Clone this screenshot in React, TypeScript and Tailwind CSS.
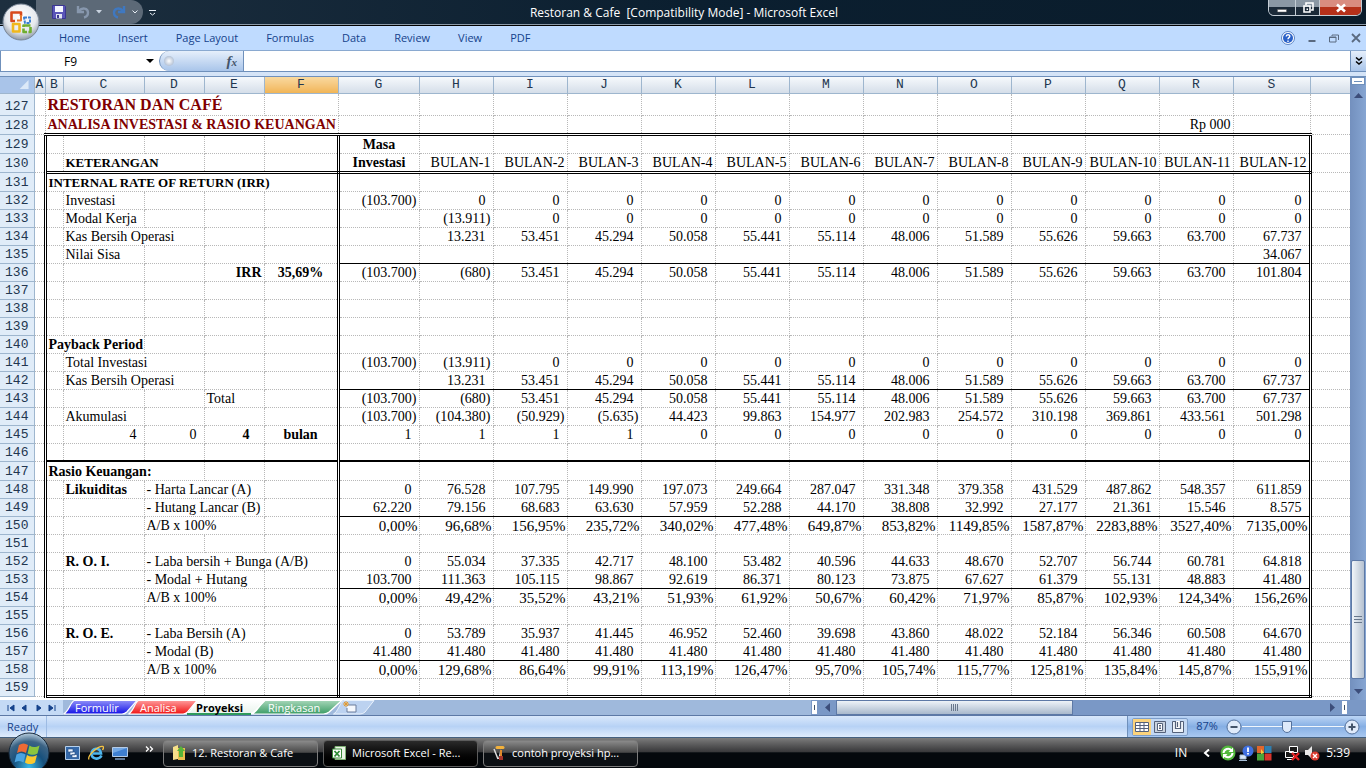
import { useState } from 'react';
import clsx from 'clsx';

type Cell = { text?: string; span?: number; cls?: string };
type Row = { n: number; h?: string; left?: Cell[]; vals?: string[]; line?: 'thin' | 'thick' | 'double' };

const COLS = ['A', 'B', 'C', 'D', 'E', 'F', 'G', 'H', 'I', 'J', 'K', 'L', 'M', 'N', 'O', 'P', 'Q', 'R', 'S'];
const COL_W = [
  'w-[11px]', 'w-[18px]', 'w-[81px]', 'w-[60px]', 'w-[60px]', 'w-[74px]', 'w-[81px]',
  'w-[74px]', 'w-[74px]', 'w-[74px]', 'w-[74px]', 'w-[74px]', 'w-[74px]', 'w-[74px]',
  'w-[74px]', 'w-[74px]', 'w-[74px]', 'w-[74px]', 'w-[77px]',
];

const v = (s: string) => s.split(' ').map((x) => (x === '_' ? '' : x));

// left-hand cells always cover B..F, the spans have to add up to 5
const inC = (text: string, span = 1): Cell[] => [{}, { text, span, cls: 'pl-0.5' }, ...Array.from({ length: 4 - span }, () => ({}))];
const inD = (text: string, span = 2, head = ''): Cell[] => [
  {},
  { text: head, cls: 'pl-0.5 font-bold' },
  { text, span, cls: 'pl-0.5' },
  ...Array.from({ length: 3 - span }, () => ({})),
];

const kas = '53.451 45.294 50.058 55.441 55.114 48.006 51.589 55.626 59.663 63.700';

const ROWS: Row[] = [
  { n: 127, h: 'h-[22px]', left: [{ text: 'RESTORAN DAN CAFÉ', span: 4, cls: 'pl-0.5 text-base leading-5 font-bold text-[#800000]' }, {}] },
  {
    n: 128, h: 'h-[19px]', line: 'double',
    left: [{ text: 'ANALISA INVESTASI & RASIO KEUANGAN', span: 5, cls: 'pl-0.5 font-bold text-[#800000]' }],
    vals: v('_ _ _ _ _ _ _ _ _ _ _ Rp~000 _'),
  },
  { n: 129, h: 'h-[19px]', vals: v('Masa _ _ _ _ _ _ _ _ _ _ _ _') },
  {
    n: 130, h: 'h-[19px]', line: 'double',
    left: [{}, { text: 'KETERANGAN', span: 2, cls: 'pl-0.5 text-[13px] leading-4 font-bold' }, {}, {}],
    vals: v('Investasi BULAN-1 BULAN-2 BULAN-3 BULAN-4 BULAN-5 BULAN-6 BULAN-7 BULAN-8 BULAN-9 BULAN-10 BULAN-11 BULAN-12'),
  },
  { n: 131, h: 'h-[19px]', left: [{ text: 'INTERNAL RATE OF RETURN (IRR)', span: 5, cls: 'pl-0.5 text-[13px] leading-4 font-bold' }] },
  { n: 132, left: inC('Investasi'), vals: v('(103.700) 0 0 0 0 0 0 0 0 0 0 0 0') },
  { n: 133, left: inC('Modal Kerja'), vals: v('_ (13.911) 0 0 0 0 0 0 0 0 0 0 0') },
  { n: 134, left: inC('Kas Bersih Operasi', 2), vals: v(`_ 13.231 ${kas} 67.737`) },
  { n: 135, line: 'thin', left: inC('Nilai Sisa'), vals: v('_ _ _ _ _ _ _ _ _ _ _ _ 34.067') },
  {
    n: 136,
    left: [{}, {}, {}, { text: 'IRR', cls: 'pr-0.5 text-right font-bold' }, { text: '35,69%', cls: 'text-center font-bold' }],
    vals: v(`(103.700) (680) ${kas} 101.804`),
  },
  { n: 137 },
  { n: 138 },
  { n: 139 },
  { n: 140, left: [{ text: 'Payback Period', span: 2, cls: 'pl-0.5 font-bold' }, {}, {}, {}] },
  { n: 141, left: inC('Total Investasi', 2), vals: v('(103.700) (13.911) 0 0 0 0 0 0 0 0 0 0 0') },
  { n: 142, line: 'thin', left: inC('Kas Bersih Operasi', 2), vals: v(`_ 13.231 ${kas} 67.737`) },
  { n: 143, left: [{}, {}, {}, { text: 'Total', cls: 'pl-0.5' }, {}], vals: v(`(103.700) (680) ${kas} 67.737`) },
  {
    n: 144, left: inC('Akumulasi'),
    vals: v('(103.700) (104.380) (50.929) (5.635) 44.423 99.863 154.977 202.983 254.572 310.198 369.861 433.561 501.298'),
  },
  {
    n: 145,
    left: [
      {},
      { text: '4', cls: 'pr-[7px] text-right' },
      { text: '0', cls: 'pr-[7px] text-right' },
      { text: '4', cls: 'pr-3.5 text-right font-bold' },
      { text: 'bulan', cls: 'text-center font-bold' },
    ],
    vals: v('1 1 1 1 0 0 0 0 0 0 0 0 0'),
  },
  { n: 146, line: 'thick' },
  { n: 147, h: 'h-[19px]', left: [{ text: 'Rasio Keuangan:', span: 3, cls: 'pl-0.5 font-bold' }, {}, {}] },
  {
    n: 148, left: inD('- Harta Lancar (A)', 2, 'Likuiditas'),
    vals: v('0 76.528 107.795 149.990 197.073 249.664 287.047 331.348 379.358 431.529 487.862 548.357 611.859'),
  },
  {
    n: 149, line: 'thin', left: inD('- Hutang Lancar (B)'),
    vals: v('62.220 79.156 68.683 63.630 57.959 52.288 44.170 38.808 32.992 27.177 21.361 15.546 8.575'),
  },
  {
    n: 150, left: inD('A/B x 100%'),
    vals: v('0,00% 96,68% 156,95% 235,72% 340,02% 477,48% 649,87% 853,82% 1149,85% 1587,87% 2283,88% 3527,40% 7135,00%'),
  },
  { n: 151 },
  {
    n: 152, left: inD('- Laba bersih + Bunga (A/B)', 3, 'R. O. I.'),
    vals: v('0 55.034 37.335 42.717 48.100 53.482 40.596 44.633 48.670 52.707 56.744 60.781 64.818'),
  },
  {
    n: 153, line: 'thin', left: inD('- Modal + Hutang'),
    vals: v('103.700 111.363 105.115 98.867 92.619 86.371 80.123 73.875 67.627 61.379 55.131 48.883 41.480'),
  },
  {
    n: 154, left: inD('A/B x 100%'),
    vals: v('0,00% 49,42% 35,52% 43,21% 51,93% 61,92% 50,67% 60,42% 71,97% 85,87% 102,93% 124,34% 156,26%'),
  },
  { n: 155 },
  {
    n: 156, left: inD('- Laba Bersih (A)', 2, 'R. O. E.'),
    vals: v('0 53.789 35.937 41.445 46.952 52.460 39.698 43.860 48.022 52.184 56.346 60.508 64.670'),
  },
  {
    n: 157, line: 'thin', left: inD('- Modal (B)'),
    vals: v('41.480 41.480 41.480 41.480 41.480 41.480 41.480 41.480 41.480 41.480 41.480 41.480 41.480'),
  },
  {
    n: 158, left: inD('A/B x 100%'),
    vals: v('0,00% 129,68% 86,64% 99,91% 113,19% 126,47% 95,70% 105,74% 115,77% 125,81% 135,84% 145,87% 155,91%'),
  },
  { n: 159, line: 'double' },
];

const GRID = 'border border-dotted border-[#b8b8b8] p-0 align-bottom';

function valueClass(text: string, col: number, row: number) {
  if (col === 0 && row < 131) return 'text-center font-bold';
  if (text.endsWith('%')) return 'pr-px text-right text-[15px] leading-4';
  if (text.endsWith(')') || /[A-Z]/.test(text)) return 'pr-0.5 text-right';
  return 'pr-[7px] text-right';
}

function bottomClass(line: Row['line'], rightSide: boolean) {
  if (line === 'double') return 'border-b-[3px] [border-bottom-style:double] border-b-black';
  if (line === 'thick') return 'border-b-2 [border-bottom-style:solid] border-b-black';
  if (line === 'thin' && rightSide) return '[border-bottom-style:solid] border-b-black';
  return '';
}

function Sheet() {
  return (
    <table className="w-full table-fixed border-collapse bg-white font-['Liberation_Serif',serif] text-sm leading-4 whitespace-nowrap text-black">
      <colgroup>
        <col className="w-[34px]" />
        {COL_W.map((w, i) => (
          <col key={i} className={w} />
        ))}
        <col />
      </colgroup>
      <thead className="bg-linear-to-b from-[#f6f9fc] to-[#d5dee9] font-['Liberation_Mono',monospace] text-[13px] text-[#22364f]">
        <tr className="h-4">
          <th aria-label="Select all" className="border-r border-b border-[#9eb6ce] bg-[#a9c4e9] p-0">
            <svg viewBox="0 0 34 15" className="block h-[15px] w-full">
              <path d="M29 3v9h-9z" fill="#dce9f8" />
            </svg>
          </th>
          {COLS.map((c) => (
            <th
              key={c}
              scope="col"
              className={clsx(
                'border-x border-b border-[#9eb6ce] p-0 text-center leading-[15px] font-normal',
                c === 'F' && 'bg-linear-to-b from-[#f9d99f] to-[#f1b556]',
              )}
            >
              {c}
            </th>
          ))}
          <th aria-label="T" className="border-b border-[#9eb6ce] p-0" />
        </tr>
      </thead>
      <tbody>
        {ROWS.map((row) => {
          const framed = row.n > 128;
          const left = row.left ?? [{}, {}, {}, {}, {}];
          return (
            <tr key={row.n} className={row.h ?? 'h-[18px]'}>
              <th scope="row" className="border-r border-b border-[#9eb6ce] bg-[#e0ecf8] p-0 text-center align-bottom font-['Liberation_Mono',monospace] text-[13px] font-normal text-[#22364f]">
                {row.n}
              </th>
              <td className={clsx(GRID, framed && 'border-r-[3px] [border-right-style:double] border-r-black')} />
              {left.map((cell, i) => (
                <td
                  key={i}
                  colSpan={cell.span ?? 1}
                  className={clsx(
                    GRID,
                    bottomClass(row.line, false),
                    framed && i === left.length - 1 && 'border-r-[3px] [border-right-style:double] border-r-black',
                    cell.cls,
                  )}
                >
                  {cell.text}
                </td>
              ))}
              {COLS.slice(6).map((c, i) => {
                const text = (row.vals?.[i] ?? '').replace('~', ' ');
                return (
                  <td
                    key={c}
                    className={clsx(
                      GRID,
                      bottomClass(row.line, true),
                      framed && c === 'S' && 'border-r-[3px] [border-right-style:double] border-r-black',
                      valueClass(text, i, row.n),
                    )}
                  >
                    {text}
                  </td>
                );
              })}
              <td className="border-b border-dotted border-[#b8b8b8] p-0" />
            </tr>
          );
        })}
      </tbody>
    </table>
  );
}

function OfficeOrb() {
  return (
    <button aria-label="Office Button" className="absolute top-[3px] left-0.5 z-10">
      <svg viewBox="0 0 38 38" className="size-[38px]">
        <defs>
          <radialGradient id="orb" cx="50%" cy="35%" r="65%">
            <stop offset="0" stopColor="#ffffff" />
            <stop offset="0.65" stopColor="#e6e9ee" />
            <stop offset="1" stopColor="#8e99a8" />
          </radialGradient>
        </defs>
        <circle cx="19" cy="19" r="18" fill="url(#orb)" stroke="#7a8798" />
        <g fill="none" strokeWidth="2.6" strokeLinejoin="round">
          <path d="M13 18H9.500V9.500H19V13" stroke="#d8491c" />
          <path d="M19 12v5.500h-4" stroke="#e8792c" strokeWidth="2" />
          <path d="M22 14.500h6V20h-5z" stroke="#3a7fd0" strokeWidth="2" strokeDasharray="3 1" />
          <path d="M11 21h6.500v7.500H11z" stroke="#f0b81c" />
          <path d="M21.500 22.500h7v6.500h-7z" stroke="#6fae2f" strokeDasharray="7 1.500" />
        </g>
      </svg>
    </button>
  );
}

function TitleBar() {
  return (
    <header className="flex h-[25px] shrink-0 items-start border-b border-[#8b9aa8] bg-linear-to-r from-[#1d2f3f] via-[#0b1f30] to-[#0a1c2b]">
      <div className="ml-9 flex h-6 w-[107px] items-center gap-2.5 rounded-r-full bg-[#5c6977] pl-4">
        <button aria-label="Save">
          <svg viewBox="0 0 14 14" className="size-3.5">
            <path d="M.5.500h12l1 1v12h-13z" fill="#5a55b8" stroke="#3b3690" />
            <path d="M3 1h8v6H3z" fill="#f4f6ff" />
            <path d="M4 9h6v4.500H4z" fill="#dfe4f2" />
            <path d="M5 10h2v3H5z" fill="#3b3690" />
          </svg>
        </button>
        <button aria-label="Undo" className="flex items-center gap-1.5">
          <svg viewBox="0 0 14 14" className="size-3.5">
            <path d="M2 1v6h6M3 6c3-4 9-3 9 1.500 0 3-2 4.500-4 5" fill="none" stroke="#8797ad" strokeWidth="2.400" />
          </svg>
          <svg viewBox="0 0 6 4" className="h-1 w-1.5"><path d="M0 0h6L3 3.500z" fill="#c8d2de" /></svg>
        </button>
        <button aria-label="Redo" className="flex items-center gap-1.5">
          <svg viewBox="0 0 14 14" className="size-3.5">
            <path d="M12 1v6H6M11 6C8 2 2 3 2 7.500c0 3 2 4.500 4 5" fill="none" stroke="#3f78c0" strokeWidth="2.400" />
          </svg>
          <svg viewBox="0 0 6 4" className="h-1 w-1.5"><path d="M.5.500 3 3 5.500.5" fill="none" stroke="#e8eef5" /></svg>
        </button>
      </div>
      <button aria-label="Customize Quick Access Toolbar" className="mt-2.5 ml-1.5">
        <svg viewBox="0 0 7 6" className="h-1.5 w-[7px]"><path d="M0 .5h7M1 3l2.500 2L6 3" fill="none" stroke="#e8eef5" /></svg>
      </button>
      <h1 className="flex-1 pt-1 pr-14 text-center text-xs leading-[18px] whitespace-pre text-white">{'Restoran & Cafe  [Compatibility Mode] - Microsoft Excel'}</h1>
      <div className="mr-1 flex h-4 w-[94px] overflow-hidden rounded-b-md border border-t-0 border-[#c3ccd4] text-white">
        <button aria-label="Minimize" className="flex w-[26px] items-center justify-center bg-linear-to-b from-[#8b98a4] from-50% to-[#1b2a38] to-50%">
          <svg viewBox="0 0 12 12" className="size-3"><path d="M1.500 7.500h9v2.500h-9z" fill="#fff" stroke="#555" strokeWidth=".5" /></svg>
        </button>
        <button aria-label="Restore" className="flex w-[25px] items-center justify-center border-x border-[#c3ccd4] bg-linear-to-b from-[#8b98a4] from-50% to-[#1b2a38] to-50%">
          <svg viewBox="0 0 12 12" className="size-3">
            <path d="M4 3V1h7v7H9M2 4h6v6H2z" fill="none" stroke="#fff" strokeWidth="1.600" />
            <path d="M4.500 6.500h1.500v1.500H4.500z" fill="#fff" />
          </svg>
        </button>
        <button aria-label="Close" className="flex flex-1 items-center justify-center bg-linear-to-b from-[#d98c80] from-50% to-[#b5301a] to-50%">
          <svg viewBox="0 0 12 12" className="size-3"><path d="m2 2.500 8 7m0-7-8 7" stroke="#fff" strokeWidth="2.600" /></svg>
        </button>
      </div>
    </header>
  );
}

function Ribbon() {
  const tabs = ['Home', 'Insert', 'Page Layout', 'Formulas', 'Data', 'Review', 'View', 'PDF'];
  return (
    <nav className="flex h-[26px] shrink-0 items-center border-b border-[#8aa9d0] bg-[#bfdbff] pl-[45px] text-[11px] text-[#15428b] shadow-[inset_0_1px_0_#000]">
      {tabs.map((t) => (
        <button key={t} className="px-3.5 pt-0.5">
          {t}
        </button>
      ))}
      <div className="mr-[5px] ml-auto flex items-center gap-3 text-[#5a6a80]">
        <button aria-label="Help">
          <svg viewBox="0 0 14 14" className="size-3.5">
            <circle cx="7" cy="7" r="6.500" fill="#fff" stroke="#5b84c4" />
            <circle cx="7" cy="7" r="5" fill="#2a61c8" />
            <path d="M5.200 5.500c0-2.400 3.600-2.300 3.600-.2C8.800 6.700 7 6.600 7 8.300M7 9.500v1.400" fill="none" stroke="#fff" strokeWidth="1.400" />
          </svg>
        </button>
        <button aria-label="Minimize window">
          <svg viewBox="0 0 10 10" className="size-2.5"><path d="M1.500 8h7" stroke="currentColor" strokeWidth="2" /></svg>
        </button>
        <button aria-label="Restore window">
          <svg viewBox="0 0 10 10" className="size-2.5"><path d="M.5 4h6.500v5H.5zM.5 4.500H7M3 2h6.500v5M3 2v1" fill="none" stroke="currentColor" /></svg>
        </button>
        <button aria-label="Close window">
          <svg viewBox="0 0 10 10" className="size-2.5"><path d="m1 1 8 8m0-8L1 9" stroke="currentColor" strokeWidth="1.800" /></svg>
        </button>
      </div>
    </nav>
  );
}

function FormulaBar() {
  const [name, setName] = useState('F9');
  const [formula, setFormula] = useState('');
  return (
    <div className="flex h-[25px] shrink-0 bg-[#d5e4f7] pb-1">
      <div className="flex flex-1 border-b border-[#6f90bb] bg-white">
        <input
          aria-label="Name Box"
          value={name}
          onChange={(e) => setName(e.target.value)}
          className="w-[140px] border-l border-[#6f90bb] pt-0.5 text-center text-xs text-black outline-none"
        />
        <button aria-label="Name Box list" className="flex w-[19px] items-center justify-center">
          <svg viewBox="0 0 8 4" className="h-1 w-2"><path d="M0 0h8L4 4z" fill="#000" /></svg>
        </button>
        <div className="flex w-[85px] items-center justify-between rounded-l-full border-r border-l border-[#6f90bb] bg-linear-to-b from-[#e6effb] to-[#a9c5ea] pr-1.5 pl-1">
          <span className="size-2.5 rounded-full bg-radial from-white to-[#98aac4]" />
          <button aria-label="Insert Function" className="font-['Liberation_Serif',serif] text-[15px] leading-4 font-bold text-[#44546a] italic">
            f<span className="text-[11px]">x</span>
          </button>
        </div>
        <input
          aria-label="Formula Bar"
          value={formula}
          onChange={(e) => setFormula(e.target.value)}
          className="min-w-0 flex-1 px-1 text-xs outline-none"
        />
        <button aria-label="Expand Formula Bar" className="flex w-4 items-center justify-center border-l border-[#6f90bb] bg-linear-to-b from-[#e6effb] to-[#a9c5ea]">
          <svg viewBox="0 0 8 8" className="size-2"><path d="m1 .5 3 2.500L7 .5M1 4.500 4 7l3-2.500" fill="none" stroke="#000" strokeWidth="1.500" /></svg>
        </button>
      </div>
    </div>
  );
}

function VerticalScroll() {
  return (
    <div className="flex w-4 shrink-0 flex-col items-center bg-linear-to-r from-[#7390be] to-[#86a5d2]">
      <div className="flex h-2 w-3.5 items-center justify-center border border-[#6f90bb] bg-white">
        <div className="h-px w-2 bg-[#6f90bb]" />
      </div>
      <button aria-label="Scroll up" className="mt-2">
        <svg viewBox="0 0 9 5" className="h-[5px] w-[9px]"><path d="M0 5h9L4.500 0z" fill="#3c4d7a" /></svg>
      </button>
      <div className="flex-[464]" />
      <div className="flex w-3.5 flex-[118] flex-col items-center justify-center gap-0.5 rounded-xs border border-[#5d79a6] bg-linear-to-r from-[#f1f5f9] to-[#b5c1d0]">
        <div className="h-px w-2 bg-[#69788c]" />
        <div className="h-px w-2 bg-[#69788c]" />
        <div className="h-px w-2 bg-[#69788c]" />
      </div>
      <button aria-label="Scroll down" className="mt-2.5 mb-1.5">
        <svg viewBox="0 0 9 5" className="h-[5px] w-[9px]"><path d="M0 0h9L4.500 5z" fill="#3c4d7a" /></svg>
      </button>
    </div>
  );
}

const SHEETS = [
  { name: 'Formulir', from: '#8f8ff8', to: '#1212e6', text: 'text-white', box: 'w-[75px] pl-3' },
  { name: 'Analisa', from: '#ff9a9a', to: '#f01414', text: 'text-white', box: '-ml-2.5 w-[70px] pl-3' },
  { name: 'Proyeksi', from: '#ffffff', to: '#e8f3ec', text: 'font-bold text-black', box: '-ml-3 z-10 w-[80px] pl-2.5' },
  { name: 'Ringkasan', from: '#a5d6b8', to: '#3d9d66', text: 'text-white', box: '-ml-[15px] w-[92px] pl-[17px]' },
];

function SheetTabs() {
  return (
    <div className="flex h-4 shrink-0 border-b border-[#5d79a6] bg-[#9fb9dc] text-[11px]">
      <div className="flex w-[63px] items-center justify-around bg-[#c4daf5] px-1 text-[#15428b]">
        {['M2 1v6M8 1 4 4l4 3z', 'M6 1 2 4l4 3z', 'M3 1l4 3-4 3z', 'M7 1v6M1 1l4 3-4 3z'].map((d, i) => (
          <button key={d} aria-label={['First sheet', 'Previous sheet', 'Next sheet', 'Last sheet'][i]}>
            <svg viewBox="0 0 9 8" className="h-2 w-[9px]"><path d={d} fill="currentColor" stroke="currentColor" /></svg>
          </button>
        ))}
      </div>
      {SHEETS.map((s) => (
        <button key={s.name} className={clsx('relative grid h-[15px] overflow-hidden text-left', s.box)}>
          <svg viewBox="0 0 80 15" preserveAspectRatio="none" className="absolute inset-0 size-full">
            <defs>
              <linearGradient id={s.name} x1="0" y1="0" x2="0" y2="1">
                <stop offset="0" stopColor={s.from} />
                <stop offset="1" stopColor={s.to} />
              </linearGradient>
            </defs>
            <path d="M.500 14C6 12 8 2 12 .5H79L68 12q-2 2-5 2z" fill={`url(#${s.name})`} stroke="#fff" strokeWidth="1.200" />
            {s.name === 'Proyeksi' && <path d="M1 14h64" stroke="#2f9a5c" strokeWidth="2" />}
          </svg>
          <span className={clsx('relative leading-4', s.text)}>{s.name}</span>
        </button>
      ))}
      <button aria-label="Insert Worksheet" className="-ml-2.5 h-[15px] w-[42px]">
        <svg viewBox="0 0 42 15" className="size-full">
          <path d="M.500 14C5 12 7 2 11 .500h30L32 12q-2 2-5 2z" fill="#bcd2f0" stroke="#eaf2fc" />
          <path d="M15 5h8v7h-9V8" fill="#f5f8fd" stroke="#6a7c9c" />
          <path d="M13 1v6M10 4h6M11 2l4 4M15 2l-4 4" stroke="#e59a2c" />
        </svg>
      </button>
      <div className="flex-1" />
      <div className="flex w-[555px] bg-[#7a98c6]">
        <div className="h-[15px] w-[7px] border border-[#7a98c6] bg-white px-0.5 py-1"><div className="h-full w-px bg-[#44546a]" /></div>
        <button aria-label="Scroll left" className="flex w-[18px] items-center justify-center">
          <svg viewBox="0 0 5 9" className="h-[9px] w-[5px]"><path d="M5 0v9L0 4.500z" fill="#3c4d7a" /></svg>
        </button>
        <div className="flex w-[237px] items-center justify-center gap-px border border-[#5d79a6] bg-linear-to-b from-[#eef3f8] to-[#a9b9cc]">
          <div className="h-[7px] w-px bg-[#69788c]" />
          <div className="h-[7px] w-px bg-[#69788c]" />
          <div className="h-[7px] w-px bg-[#69788c]" />
          <div className="h-[7px] w-px bg-[#69788c]" />
        </div>
        <div className="flex-1" />
        <button aria-label="Scroll right" className="flex w-3.5 items-center justify-center">
          <svg viewBox="0 0 5 9" className="h-[9px] w-[5px]"><path d="M0 0v9l5-4.500z" fill="#3c4d7a" /></svg>
        </button>
        <div className="mr-[18px] ml-0.5 h-[15px] w-[7px] border border-[#7a98c6] bg-white px-0.5 py-1"><div className="h-full w-px bg-[#44546a]" /></div>
      </div>
    </div>
  );
}

function StatusBar() {
  const [zoom, setZoom] = useState(43);
  return (
    <div className="flex h-[22px] shrink-0 border-b border-[#44607f] bg-linear-to-b from-[#d9e8fb] via-[#b7d2f5] to-[#dfecfc] text-[11px] text-[#15428b]">
      <span className="w-[47px] border-r border-[#9dbbe3] pl-[7px] leading-[21px]">Ready</span>
      <div className="flex-1" />
      <div className="flex w-[239px] items-center border-l border-[#6f90bb] bg-linear-to-b from-[#bcd5f5] via-[#86afe4] to-[#a9c8f0] pl-1">
        <div className="flex h-[18px] rounded-xs border border-[#7d9dc9] bg-[#c3d8f3]">
          <button aria-label="Normal view" className="flex w-[18px] items-center justify-center bg-[#fbd37c]">
            <svg viewBox="0 0 14 12" className="h-3 w-3.5">
              <path d="M.5 1.500h13v9H.5zM.5 4.500h13M.5 7.500h13M5 1.500v9M9 1.500v9" fill="#fff" stroke="#54617a" />
            </svg>
          </button>
          <button aria-label="Page Layout view" className="flex w-[18px] items-center justify-center">
            <svg viewBox="0 0 14 12" className="h-3 w-3.5">
              <path d="M1.500.5h11v11h-11z" fill="#c9d2de" stroke="#54617a" />
              <path d="M4.500 2.500h5v7h-5zM6 4.500h2M6 6h2M6 7.500h2" fill="#fff" stroke="#54617a" />
            </svg>
          </button>
          <button aria-label="Page Break Preview" className="flex w-[18px] items-center justify-center">
            <svg viewBox="0 0 14 12" className="h-3 w-3.5">
              <path d="M1.500.5h11v11h-11z" fill="#eef3f9" stroke="#54617a" />
              <path d="M4.500 0v7.500h5V0M6.500 1v5" fill="#fff" stroke="#54617a" strokeWidth="1.200" />
            </svg>
          </button>
        </div>
        <button className="w-[38px] text-center">87%</button>
        <button aria-label="Zoom Out">
          <svg viewBox="0 0 16 16" className="size-4"><circle cx="8" cy="8" r="7" fill="#dfeafa" stroke="#54719c" /><path d="M4.500 8h7" stroke="#44546a" strokeWidth="2" /></svg>
        </button>
        <input
          type="range"
          aria-label="Zoom"
          value={zoom}
          onChange={(e) => setZoom(Number(e.target.value))}
          className="h-3 w-[102px] appearance-none bg-[linear-gradient(#f0f6fd,#f0f6fd)] bg-[length:100%_1px] bg-center bg-no-repeat [&::-webkit-slider-thumb]:h-3 [&::-webkit-slider-thumb]:w-2.5 [&::-webkit-slider-thumb]:appearance-none [&::-webkit-slider-thumb]:rounded-b-full [&::-webkit-slider-thumb]:border [&::-webkit-slider-thumb]:border-[#54719c] [&::-webkit-slider-thumb]:bg-[#dfeafa]"
        />
        <button aria-label="Zoom In">
          <svg viewBox="0 0 16 16" className="size-4"><circle cx="8" cy="8" r="7" fill="#dfeafa" stroke="#54719c" /><path d="M4.500 8h7M8 4.500v7" stroke="#44546a" strokeWidth="2" /></svg>
        </button>
      </div>
    </div>
  );
}

function Taskbar() {
  const task = 'flex h-[27px] w-[155px] items-center gap-1.5 rounded-sm border pl-2 text-left text-[11px] text-white';
  return (
    <footer className="relative flex h-[30px] shrink-0 items-center bg-linear-to-b from-[#7c7c7c] via-[#3a3a3c] via-45% to-[#04080c] to-50% text-white">
      <button aria-label="Start" className="absolute -top-1.5 left-2">
        <svg viewBox="0 0 42 42" className="size-[42px]">
          <defs>
            <radialGradient id="start" cx="50%" cy="85%" r="85%">
              <stop offset="0" stopColor="#37b8e8" />
              <stop offset="0.45" stopColor="#17507c" />
              <stop offset="0.75" stopColor="#3d6485" />
              <stop offset="1" stopColor="#b9cfdf" />
            </radialGradient>
          </defs>
          <circle cx="21" cy="21" r="20" fill="url(#start)" stroke="#16283a" />
          <path d="M11 13c3-2 6-2 9 0l-2 8c-3-2-6-2-9 0z" fill="#ee6a34" />
          <path d="M21.500 13.500c3 2 6 2 10 0l-2 8c-3 2-7 1.500-10 0z" fill="#8cc63e" />
          <path d="M8.500 22.500c3-2 6-2 9 0l-2 8c-3-2-6-2-9 0z" fill="#4aa3e0" />
          <path d="M19 23c3 2 6 2 10 0l-2 7.500c-3 2-7 2-10 0z" fill="#fbc82e" />
        </svg>
      </button>
      <div className="ml-[65px] flex items-center gap-2">
        <button aria-label="Switch windows">
          <svg viewBox="0 0 15 14" className="h-3.5 w-[15px]">
            <path d="M.5.500h14v13H.5z" fill="#3468a8" stroke="#b5d0ec" />
            <path d="M3 3h5v3H3zM5 6h5v3H5zM7 8.500h5v3H7z" fill="#eef6ff" stroke="#234a80" strokeWidth=".6" />
          </svg>
        </button>
        <button aria-label="Internet Explorer">
          <svg viewBox="0 0 16 16" className="size-4">
            <path d="M13.500 10.500C11 15.500 3.500 14 3.500 8.500s8.500-7 9.500 0H5" fill="none" stroke="#4fb6ee" strokeWidth="2.600" />
            <path d="M1 14.500C-1 11 10 .5 15 1.500c1 .8.500 2-.5 3.500" fill="none" stroke="#f6c443" strokeWidth="1.300" />
          </svg>
        </button>
        <button aria-label="Show desktop">
          <svg viewBox="0 0 16 13" className="h-[13px] w-4">
            <path d="M.5.500h15v9H.5z" fill="#3f7fd0" stroke="#b5cbe6" />
            <path d="M1 1h14L1 6z" fill="#74a8e4" />
            <path d="M3 12h10" stroke="#7d9cc4" strokeWidth="1.500" />
          </svg>
        </button>
      </div>
      <button aria-label="More toolbars" className="mb-2 ml-[17px] w-[18px] text-left">
        <svg viewBox="0 0 9 6" className="h-1.5 w-[9px]"><path d="M1 .5 3.500 3 1 5.500M5 .5 7.500 3 5 5.500" fill="none" stroke="#fff" strokeWidth="1.300" /></svg>
      </button>
      <div className="flex gap-[5px]">
        <button className={clsx(task, 'border-[#7c7c7c] bg-linear-to-b from-[#8a8a8a] via-[#4a4a4a] via-45% to-[#0c1014] to-50%')}>
          <svg viewBox="0 0 14 16" className="h-4 w-3.5">
            <path d="M1 2 6 0v14l-5 1z" fill="#f8e08a" />
            <path d="M6 3h7v12H6z" fill="#e9bf4c" />
            <path d="M7 12V6H5l4-5 4 5h-2v6z" fill="#56b53a" />
          </svg>
          12. Restoran &amp; Cafe
        </button>
        <button className={clsx(task, 'border-[#5c5c5c] bg-linear-to-b from-[#2b2b2b] to-black')}>
          <svg viewBox="0 0 14 14" className="size-3.5">
            <path d="M3 .500h10.500v13H3z" fill="#eaf5e6" stroke="#7fb276" />
            <path d="M.5 3h9v9h-9z" fill="#fff" stroke="#3a8a3a" />
            <path d="m2.500 5 5 5.500m0-5.500-5 5.500" stroke="#2c8a34" strokeWidth="1.800" />
          </svg>
          Microsoft Excel - Re...
        </button>
        <button className={clsx(task, 'border-[#7c7c7c] bg-linear-to-b from-[#8a8a8a] via-[#4a4a4a] via-45% to-[#0c1014] to-50%')}>
          <svg viewBox="0 0 14 16" className="h-4 w-3.5">
            <path d="M2 4 6 14M9 5l-2 9" stroke="#ddd" strokeWidth="1.500" />
            <path d="M5 2.500h6" stroke="#f2b13c" strokeWidth="3" strokeLinecap="round" />
            <path d="M9 5v6" stroke="#e08a2c" strokeWidth="2" />
            <path d="M7 11h4v4H7z" fill="#a3342a" />
          </svg>
          contoh proyeksi hp...
        </button>
      </div>
      <div className="mr-4 ml-auto flex items-center text-xs">
        <span>IN</span>
        <button aria-label="Show hidden icons" className="mr-2.5 ml-4">
          <svg viewBox="0 0 7 8" className="h-2 w-[7px]"><path d="M6 .5 2 4l4 3.500" fill="none" stroke="#fff" strokeWidth="2" /></svg>
        </button>
        <div className="flex items-center gap-0.5">
          <svg viewBox="0 0 16 16" className="size-4">
            <circle cx="8" cy="8" r="7.500" fill="#52b83c" />
            <path d="M3.500 8a4.500 4.500 0 0 1 8-2.500M12.500 8a4.500 4.500 0 0 1-8 2.500" fill="none" stroke="#fff" strokeWidth="2" />
            <path d="M13 2.500V7H8.500zM3 13.500V9h4.500z" fill="#fff" />
          </svg>
          <svg viewBox="0 0 16 16" className="size-4">
            <path d="M2 10h6v4H2zM1 15.500h8" fill="#d9e6f4" stroke="#a9bfd8" />
            <circle cx="10" cy="6" r="5.500" fill="#3f6fe0" />
            <path d="M10 2.500v4.500M10 8v1.500" stroke="#fff" strokeWidth="1.800" />
          </svg>
          <svg viewBox="0 0 16 16" className="size-4">
            <path d="M1 1h7v7H1z" fill="#e0662c" />
            <path d="M8.500 1h7v7h-7z" fill="#2f7fb0" />
            <path d="M1 8.500h7v7H1z" fill="#4aa53c" />
            <path d="M8.500 8.500h7v7h-7z" fill="#d8342c" />
            <path d="M5 4v5l3-1z" fill="#f5d23c" />
          </svg>
        </div>
        <div className="mr-1.5 ml-3 flex items-center gap-1">
          <svg viewBox="0 0 16 16" className="size-4">
            <path d="M5.500 1.500h8v6h-8zM1.500 6.500h8v6h-8zM3 14.500h5" fill="#1a1a1a" stroke="#fff" />
            <path d="m8 8 7 7m0-7-7 7" stroke="#e02020" strokeWidth="2.400" />
          </svg>
          <svg viewBox="0 0 16 16" className="size-4">
            <path d="M1 5h3l4-4v13l-4-4H1z" fill="#e8e8e8" />
            <circle cx="11" cy="11" r="4.500" fill="#d83a30" />
            <path d="m9 9 4 4m0-4-4 4" stroke="#fff" strokeWidth="1.400" />
          </svg>
        </div>
        <time>5:39</time>
      </div>
    </footer>
  );
}

export default function App() {
  return (
    <div className="relative flex h-screen flex-col overflow-hidden bg-[#bfdbff] font-['Open_Sans',sans-serif]">
      <OfficeOrb />
      <TitleBar />
      <Ribbon />
      <FormulaBar />
      <main className="flex min-h-0 flex-1 border-t border-[#6f90bb]">
        <div className="min-w-0 flex-1 overflow-hidden bg-white">
          <Sheet />
        </div>
        <VerticalScroll />
      </main>
      <SheetTabs />
      <StatusBar />
      <Taskbar />
    </div>
  );
}
